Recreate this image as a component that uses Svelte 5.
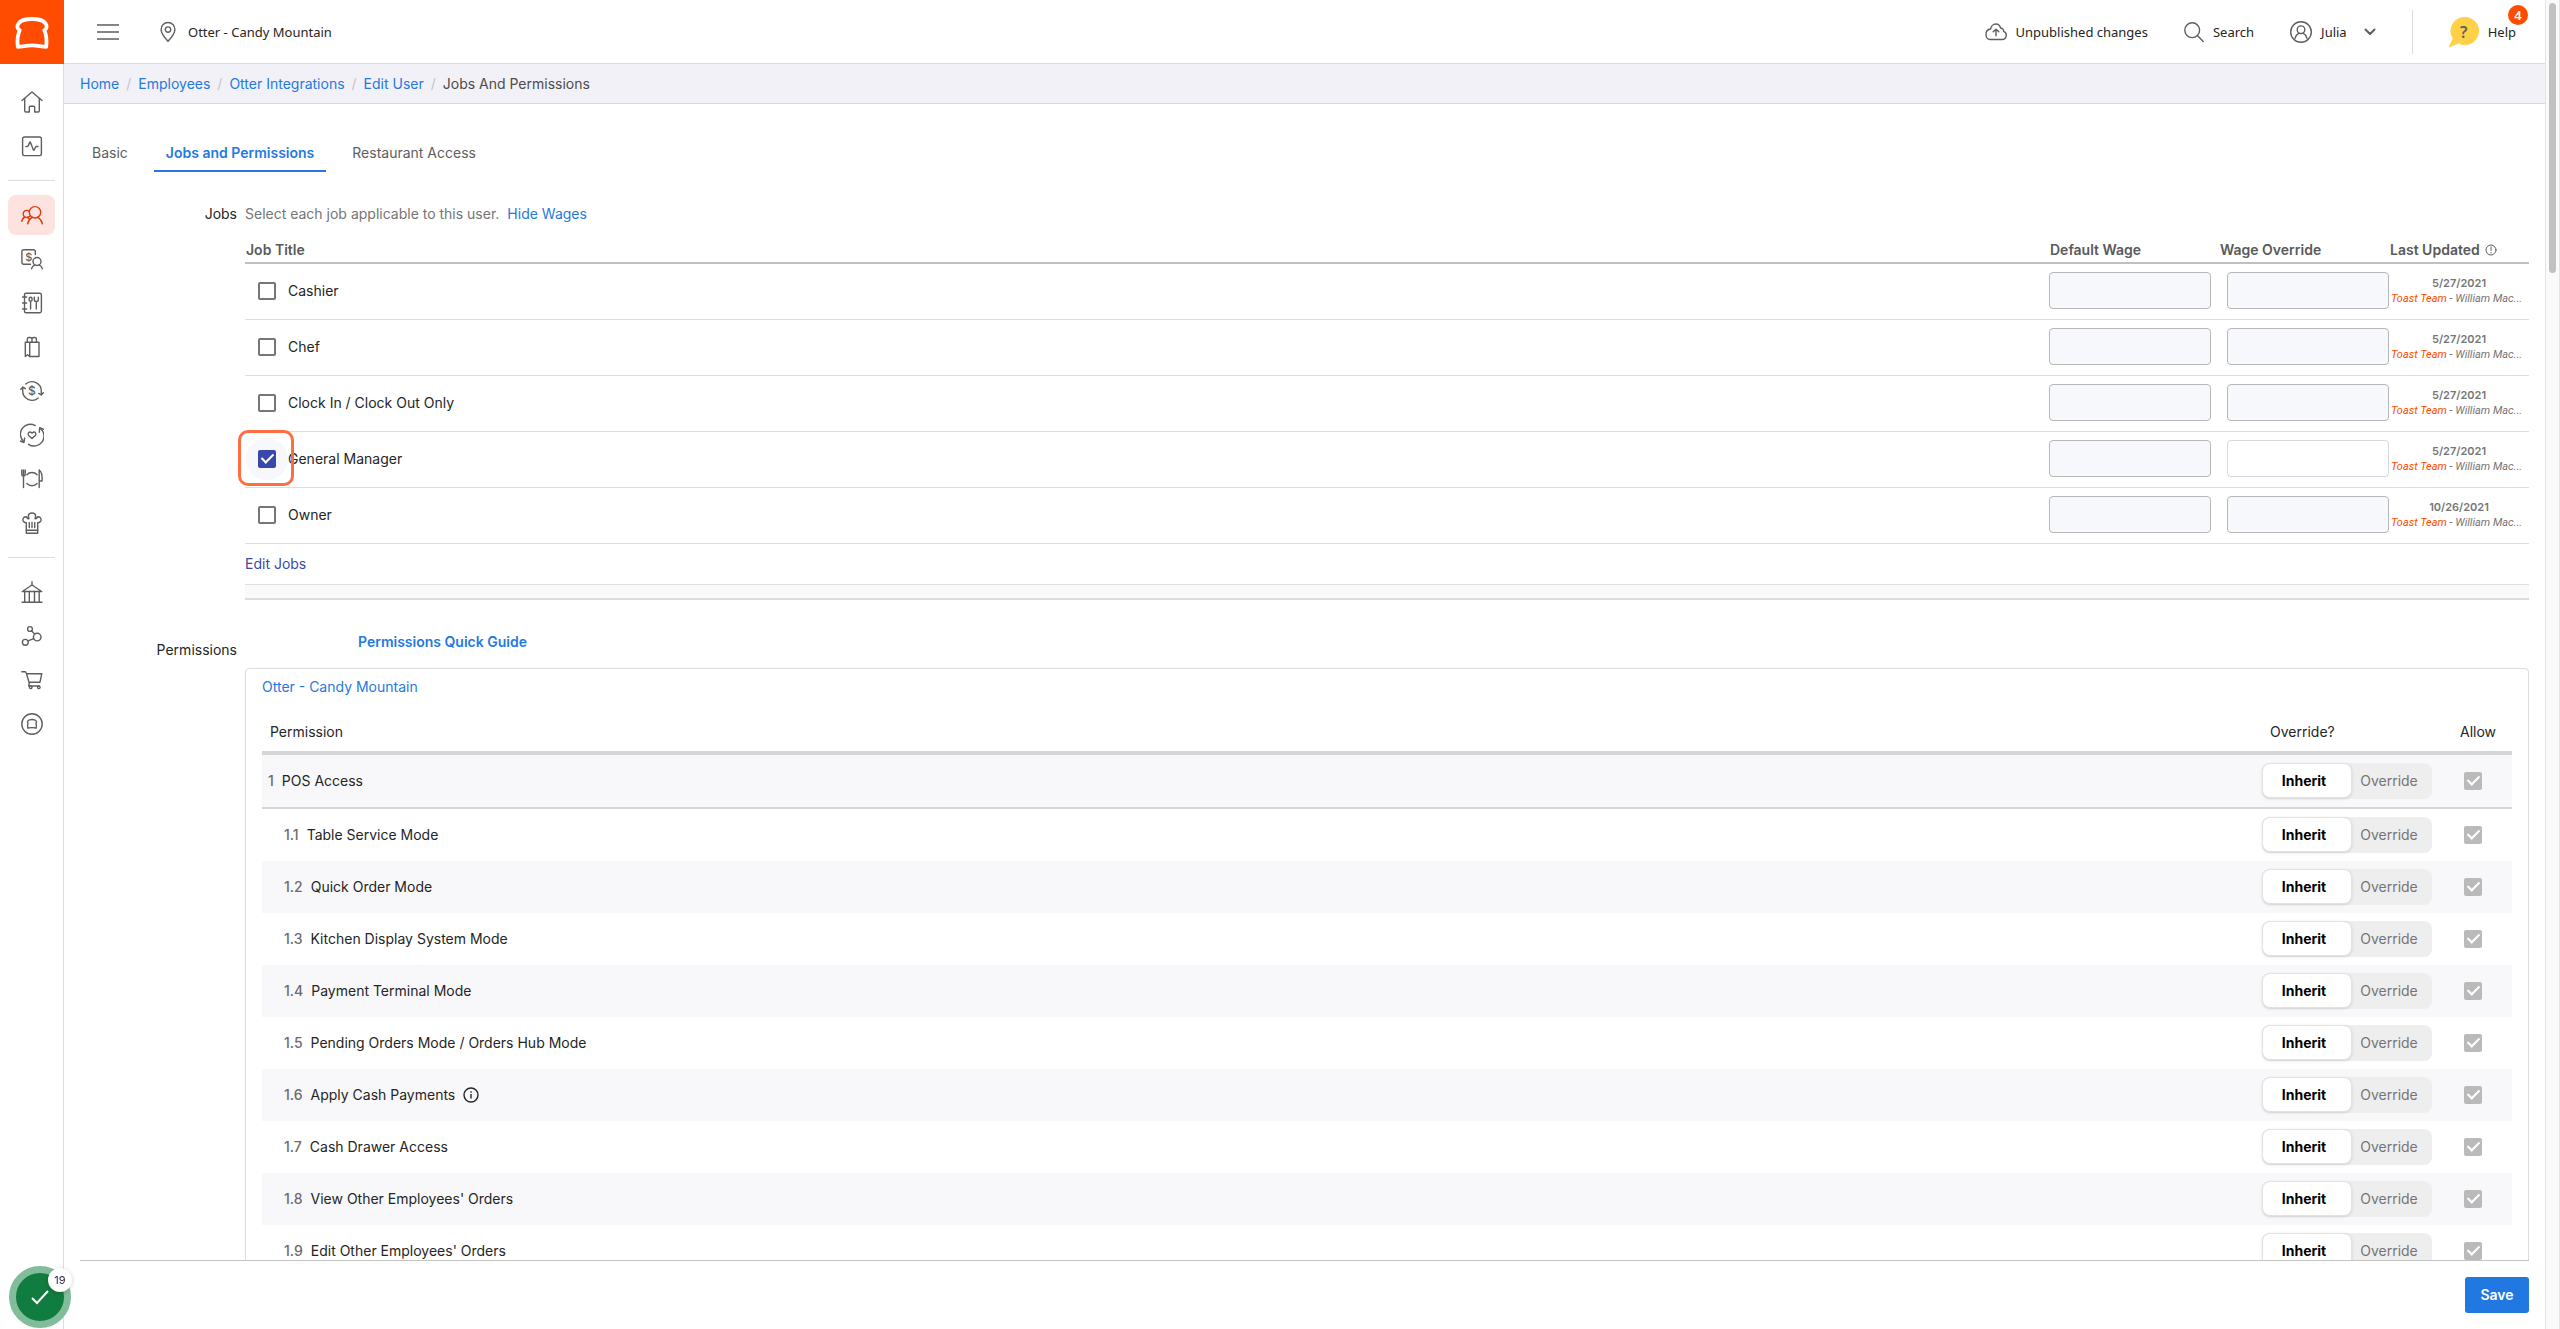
<script lang="ts">
  type Glyph = { x: number; y: number; size: number };
  type NavItem = { label: string; paths: string[]; glyph?: Glyph; active?: boolean };

  const navGroups: NavItem[][] = [
    [
      {
        label: 'Home',
        paths: [
          'M2 10.5 12 2l10 8.5',
          'M4.7 8.5v12.2A1.3 1.3 0 0 0 6 22h3.3v-4.7a1 1 0 0 1 1-1h3.4a1 1 0 0 1 1 1V22H18a1.3 1.3 0 0 0 1.3-1.3V8.5',
        ],
      },
      {
        label: 'Reports',
        paths: [
          'M4.4 3h15.2a1.8 1.8 0 0 1 1.8 1.8v15a1.8 1.8 0 0 1-1.8 1.8H4.4a1.8 1.8 0 0 1-1.8-1.8v-15A1.8 1.8 0 0 1 4.4 3Z',
          'M6 12.5h1.4c.6 0 .8-.4 1-.9l1.2-3.2c.2-.6.7-.6.9 0l2.8 7.4c.2.5.6.5.9 0l1.3-2.6c.3-.5.5-.7 1-.7H18',
        ],
      },
    ],
    [
      {
        label: 'Employees',
        active: true,
        paths: [
          'M15 3.6a5.7 5.7 0 1 1 0 11.4 5.7 5.7 0 0 1 0-11.4Z',
          'M9.3 8.4A3.6 3.6 0 1 0 9.6 13.2',
          'M7.6 20.8c.8-3 2.3-5.2 4.5-6.4M22.4 20.8c-.8-3-2.3-5.2-4.5-6.4',
          'M1.7 18.3c.6-2.2 1.6-3.6 3-4.3M7.6 14l1.8 2.2',
        ],
      },
      {
        label: 'Payroll',
        paths: [
          'M10.5 17.3H3.7a1.8 1.8 0 0 1-1.8-1.8v-11a1.8 1.8 0 0 1 1.8-1.8h9.8a1.8 1.8 0 0 1 1.8 1.8v3',
          'M17 10.5a4 4 0 1 1 0 8 4 4 0 0 1 0-8Z',
          'M11.5 21.7c.6-1.9 1.7-3.2 3.3-3.9M22.4 21.7c-.6-1.9-1.7-3.2-3.3-3.9',
        ],
        glyph: { x: 8.7, y: 13.6, size: 11 },
      },
      {
        label: 'Menus',
        paths: [
          'M6 2.2h13.6a1.8 1.8 0 0 1 1.8 1.8v16a1.8 1.8 0 0 1-1.8 1.8H6A1.5 1.5 0 0 1 4.5 20.3V3.7A1.5 1.5 0 0 1 6 2.2Z',
          'M2.6 6h4M2.6 12h4M2.6 18h4',
          'M10.6 6.3c1.1 0 1.5 1 1.5 2s-.5 2-1.5 2-1.5-1-1.5-2 .4-2 1.5-2ZM10.6 10.5V18',
          'M14.3 6.3v2.4c0 1.2.9 1.8 2 1.8s2-.6 2-1.8V6.3M16.3 10.5V18',
        ],
      },
      {
        label: 'Takeout & delivery',
        paths: [
          'M5.3 7.2H19v14.3H9.7V7.2M5.3 7.2v14.3l2.2-1.8 2.2 1.8',
          'M7.3 7V4.2c0-1 .8-1.7 1.7-1.7h1.3c1 0 1.7.7 1.7 1.7V7M12 4.2c0-1 .8-1.7 1.7-1.7h1c1 0 1.7.7 1.7 1.7V7',
        ],
      },
      {
        label: 'Payments',
        paths: [
          'M5.8 5A9.4 9.4 0 0 1 21.3 12.5v3.2M18.2 19A9.4 9.4 0 0 1 2.7 11.5V8.3',
          'M23.3 13.8l-2 2.2-2.5-1.6M.9 10.3l1.9-2.2 2.5 1.6',
        ],
        glyph: { x: 12, y: 16.4, size: 12 },
      },
      {
        label: 'Marketing',
        paths: [
          'M15.2 2.6A9.9 9.9 0 0 0 3.6 18.5M8.5 21.3A9.9 9.9 0 0 0 20.4 5.5',
          'M19.3 9.2l.4-4.5 4.1 1.6M4.6 15 4 19.5 0 17.9',
          'M12 15.5 8.7 12.4c-1.6-1.8.6-4.6 2.6-2.9l.7.6.7-.6c2-1.7 4.2 1.1 2.6 2.9Z',
        ],
      },
      {
        label: 'Tables',
        paths: [
          'M1.8 3v4.5C1.8 8.500 2.400 9 3.5 9s1.700-.5 1.700-1.500V3M3.500 3v17.500',
          'M19.2 3v17.5M19.2 3c2.2 1.5 3.2 6 2.9 11h-2.9',
          'M6.9 7.7a7 7 0 0 1 10.2 0M6.9 16.5a7 7 0 0 0 10.2 0',
        ],
      },
      {
        label: 'Kitchen',
        paths: [
          'M6.3 22.3V11.8C1.7 11.8 1.8 5.4 6.5 5.7 7.3 8 8.5 8 9 7.5 7 3.5 10 2 12 2s5 1.5 3 5.5c.5.5 1.7.5 2.5-1.8 4.7-.3 4.8 6.1.2 6.1v10.5Z',
          'M6.3 19.2h11.4M9.3 11.5v5M12 11.5v5M14.7 11.5v5',
        ],
      },
    ],
    [
      {
        label: 'Banking',
        paths: ['M12 1.8V5L2.3 11.5h19.4L12 5', 'M4.7 11.5V22M9.3 11.5V22M14.5 11.5V22M19.2 11.5V22M2 22.2h20'],
      },
      {
        label: 'Integrations',
        paths: [
          'M10 2.6a2.4 2.4 0 1 1 0 4.8 2.4 2.4 0 0 1 0-4.8Z',
          'M17.2 9.3a3.8 3.8 0 1 1 0 7.6 3.8 3.8 0 0 1 0-7.6Z',
          'M5.3 15.4a2.9 2.9 0 1 1 0 5.8 2.9 2.9 0 0 1 0-5.8Z',
          'M11.6 6.8l3 3.3M7.9 16.9l5.8-2.3',
        ],
      },
      {
        label: 'Shop',
        paths: [
          'M1.8 3.7h3.7l1 2h15.3L20 14.2H9L6.5 5.7M9.5 14.2l-.8 3.8h10.5',
          'M10.7 18a1.3 1.3 0 1 1 0 2.6 1.3 1.3 0 0 1 0-2.6ZM18.8 18a1.3 1.3 0 1 1 0 2.6 1.3 1.3 0 0 1 0-2.6Z',
        ],
      },
      {
        label: 'Toast account',
        paths: [
          'M12 1.8a10.2 10.2 0 1 1 0 20.4 10.2 10.2 0 0 1 0-20.4Z',
          'M7.8 16c-.4-1.8-.4-3.200.2-4.500C6.900 10 7.600 7.500 12 7.500s5.100 2.500 4 4c.6 1.300.6 2.700.2 4.500-2.500-.4-5.900-.4-8.400 0Z',
        ],
      },
    ],
  ];

  const crumbs = ['Home', 'Employees', 'Otter Integrations', 'Edit User'];
  const tabs = ['Basic', 'Jobs and Permissions', 'Restaurant Access'];
  let activeTab = $state('Jobs and Permissions');
  let showWages = $state(true);

  let jobs = $state([
    { title: 'Cashier', checked: false, updated: '5/27/2021' },
    { title: 'Chef', checked: false, updated: '5/27/2021' },
    { title: 'Clock In / Clock Out Only', checked: false, updated: '5/27/2021' },
    { title: 'General Manager', checked: true, updated: '5/27/2021' },
    { title: 'Owner', checked: false, updated: '10/26/2021' },
  ]);

  let permissions = $state([
    { id: '1', name: 'POS Access', override: false },
    { id: '1.1', name: 'Table Service Mode', override: false },
    { id: '1.2', name: 'Quick Order Mode', override: false },
    { id: '1.3', name: 'Kitchen Display System Mode', override: false },
    { id: '1.4', name: 'Payment Terminal Mode', override: false },
    { id: '1.5', name: 'Pending Orders Mode / Orders Hub Mode', override: false },
    { id: '1.6', name: 'Apply Cash Payments', override: false, info: true },
    { id: '1.7', name: 'Cash Drawer Access', override: false },
    { id: '1.8', name: "View Other Employees' Orders", override: false },
    { id: '1.9', name: "Edit Other Employees' Orders", override: false },
  ]);
</script>

<div class="app">
  <aside class="sidebar">
    <a class="logo" href="#home" aria-label="Toast">
      <svg width="64" height="64" viewBox="0 0 64 64" fill="none" stroke="#fff" stroke-width="3.8" stroke-linejoin="round">
        <path d="M17.8 46.9C17 40 17.3 35.2 19.7 30.2 17 28.8 16.8 25.8 18.4 23.6 20.6 20.2 26 19 32 19s11.4 1.2 13.6 4.6c1.6 2.2 1.4 5.2-1.3 6.6 2.4 5 2.7 9.8 1.9 16.7C41 46.8 38 45.4 32 45.4s-9 1.4-14.2 1.5Z" />
      </svg>
    </a>
    <nav aria-label="Main">
      {#each navGroups as group}
        <ul class="nav-group">
          {#each group as item (item.label)}
            <li>
              <a href="#nav" class="nav-item" class:active={item.active} aria-label={item.label}>
                <svg class="icon" width="24" height="24" viewBox="0 0 24 24">
                  {#each item.paths as d}
                    <path {d} />
                  {/each}
                  {#if item.glyph}
                    <text x={item.glyph.x} y={item.glyph.y} font-size={item.glyph.size}>$</text>
                  {/if}
                </svg>
              </a>
            </li>
          {/each}
        </ul>
      {/each}
    </nav>
  </aside>

  <div class="main">
    <header class="topbar">
      <button type="button" class="icon-button" aria-label="Toggle menu">
        <svg class="icon" width="22" height="22" viewBox="0 0 22 22"><path d="M0 4h22M0 11h22M0 18h22" /></svg>
      </button>
      <button type="button" class="top-item location">
        <svg class="icon" width="16" height="22" viewBox="0 0 16 22">
          <path d="M8 1.5a6.9 6.9 0 0 0-6.9 7C1.1 13 6 18 8 20.3 10 18 14.9 13 14.9 8.5A6.9 6.9 0 0 0 8 1.5Z" />
          <circle cx="8" cy="8.6" r="2.7" />
        </svg>
        Otter - Candy Mountain
      </button>
      <div class="top-actions">
        <button type="button" class="top-item">
          <svg class="icon" width="22" height="22" viewBox="0 0 22 22">
            <path d="M5 18.5h12a4.2 4.2 0 0 0 1.6-8.1c.2-2-1.4-3.4-3-3.4C14.8 4.3 13 3 11 3 8.2 3 5.9 5.2 5.7 8 2.8 8.3 1 10.6 1 13.4c0 2.9 1.8 5.1 4 5.1Z" />
            <path d="M11 14.8V8.5M8.2 10.8 11 8.2l2.8 2.6" />
          </svg>
          Unpublished changes
        </button>
        <button type="button" class="top-item">
          <svg class="icon" width="20" height="22" viewBox="0 0 20 22">
            <circle cx="8.2" cy="9.2" r="7.4" />
            <path d="M13.4 14.6l5.8 5.8" />
          </svg>
          Search
        </button>
        <button type="button" class="top-item user">
          <svg class="icon" width="22" height="22" viewBox="0 0 22 22">
            <circle cx="11" cy="11" r="10.3" />
            <circle cx="11" cy="8.7" r="3.8" />
            <path d="M5 17.4c.7-2.4 2-4.200 4-5.200M17 17.400c-.7-2.400-2-4.200-4-5.200" />
          </svg>
          Julia
          <svg class="icon chevron" width="12" height="8" viewBox="0 0 12 8"><path d="M1.5 1.5 6 6l4.5-4.5" /></svg>
        </button>
        <span class="divider"></span>
        <button type="button" class="top-item help">
          <span class="help-bubble">
            <svg width="30" height="30" viewBox="0 0 30 30" fill="#ffd147" aria-hidden="true">
              <path d="M16 0a14 14 0 1 1-6.5 26.400L1 30c-.8.300-1.300-.4-.9-1l3.700-7.400A14 14 0 0 1 16 0Z" />
            </svg>
            <span class="help-mark">?</span>
          </span>
          Help
          <span class="badge">4</span>
        </button>
      </div>
    </header>

    <nav class="breadcrumbs" aria-label="Breadcrumb">
      {#each crumbs as crumb}
        <a href="#crumb">{crumb}</a>
        <span class="slash">/</span>
      {/each}
      <span>Jobs And Permissions</span>
    </nav>

    <main class="content">
      <div class="tabs" role="tablist">
        {#each tabs as tab}
          <button
            type="button"
            role="tab"
            class="tab"
            class:selected={activeTab === tab}
            aria-selected={activeTab === tab}
            onclick={() => (activeTab = tab)}>{tab}</button
          >
        {/each}
      </div>

      <section class="form-row">
        <h2 class="form-label">Jobs</h2>
        <div class="form-body">
          <p class="hint">
            Select each job applicable to this user.
            <button type="button" class="link" onclick={() => (showWages = !showWages)}>
              {showWages ? 'Hide Wages' : 'Show Wages'}
            </button>
          </p>

          <table class="jobs">
            <thead>
              <tr>
                <th>Job Title</th>
                {#if showWages}
                  <th class="wage-col">Default Wage</th>
                  <th class="wage-col">Wage Override</th>
                {/if}
                <th class="updated-col">
                  <span class="updated-head">
                    Last Updated
                    <svg class="icon" width="12" height="12" viewBox="0 0 12 12">
                      <circle cx="6" cy="6" r="5" /><path d="M6 3v3.5M6 8.500v.5" />
                    </svg>
                  </span>
                </th>
              </tr>
            </thead>
            <tbody>
              {#each jobs as job (job.title)}
                <tr>
                  <td>
                    <label class="job">
                      <span class="check-wrap" class:highlight={job.checked}>
                        <input type="checkbox" class="check" bind:checked={job.checked} />
                      </span>
                      {job.title}
                    </label>
                  </td>
                  {#if showWages}
                    <td class="wage">
                      <input class="wage-input" type="text" disabled aria-label="Default wage, {job.title}" />
                    </td>
                    <td class="wage override">
                      <input class="wage-input" type="text" disabled={!job.checked} aria-label="Wage override, {job.title}" />
                    </td>
                  {/if}
                  <td class="updated">
                    <strong>{job.updated}</strong>
                    <em><span class="team">Toast Team</span> - William Mac...</em>
                  </td>
                </tr>
              {/each}
            </tbody>
          </table>

          <a class="edit-jobs" href="#jobs">Edit Jobs</a>
          <div class="band"></div>
        </div>
      </section>

      <section class="form-row permissions">
        <h2 class="form-label">Permissions</h2>
        <div class="form-body">
          <a class="guide" href="#guide">Permissions Quick Guide</a>
          <div class="panel">
            <a class="restaurant" href="#restaurant">Otter - Candy Mountain</a>
            <table class="perms">
              <thead>
                <tr>
                  <th>Permission</th>
                  <th class="override-col">Override?</th>
                  <th class="allow-col">Allow</th>
                </tr>
              </thead>
              <tbody>
                {#each permissions as perm, i (perm.id)}
                  <tr class:top-level={i === 0}>
                    <td>
                      <span class="perm">
                        <span class="num">{perm.id}</span>
                        {perm.name}
                        {#if perm.info}
                          <svg class="info" width="16" height="16" viewBox="0 0 16 16">
                            <circle cx="8" cy="8" r="7" /><path d="M8 7v4.5M8 4.3v1.4" />
                          </svg>
                        {/if}
                      </span>
                    </td>
                    <td>
                      <div class="toggle">
                        <button type="button" class:on={!perm.override} aria-pressed={!perm.override} onclick={() => (perm.override = false)}>Inherit</button>
                        <button type="button" class:on={perm.override} aria-pressed={perm.override} onclick={() => (perm.override = true)}>Override</button>
                      </div>
                    </td>
                    <td class="allow">
                      <input type="checkbox" class="check" checked disabled={!perm.override} aria-label="Allow {perm.name}" />
                    </td>
                  </tr>
                {/each}
              </tbody>
            </table>
          </div>
        </div>
      </section>
    </main>

    <footer class="footer">
      <button type="button" class="save">Save</button>
    </footer>
  </div>

  <div class="scrollbar" aria-hidden="true"><div class="thumb"></div></div>

  <button type="button" class="checklist" aria-label="Open checklist">
    <svg width="24" height="24" viewBox="0 0 24 24" fill="none" stroke="#fff" stroke-width="2"><path d="M4 13l5 5L20 6" /></svg>
    <span class="count">19</span>
  </button>
</div>

<style>
  :global(body) {
    margin: 0;
    overflow: hidden;
  }

  .app {
    --blue: #2479e2;
    --grey: #5e5e5e;
    --line: #dcdcde;
    display: grid;
    grid-template-columns: 64px 1fr 15px;
    height: 100vh;
    background: #fff;
    color: #252525;
    font: 14px/20px Inter, "Liberation Sans", sans-serif;
  }

  .app *,
  .app *::before,
  .app *::after {
    box-sizing: border-box;
  }

  button {
    font: inherit;
    color: inherit;
    border: 0;
    padding: 0;
    background: none;
    cursor: pointer;
  }

  a {
    color: var(--blue);
    text-decoration: none;
  }

  svg {
    display: block;
    flex: none;
  }

  .icon {
    fill: none;
    stroke: currentColor;
    stroke-width: 1.4;
    stroke-linecap: round;
    stroke-linejoin: round;
    color: var(--grey);
  }

  .icon text {
    fill: currentColor;
    stroke: none;
    text-anchor: middle;
    font-weight: 500;
  }

  /* sidebar */
  .sidebar {
    border-right: 1px solid var(--line);
  }

  .logo {
    display: block;
    width: 64px;
    height: 64px;
    background: #ff4c00;
  }

  .sidebar nav {
    padding: 4px 8px;
  }

  .nav-group {
    display: flex;
    flex-direction: column;
    gap: 4px;
    margin: 0;
    padding: 14px 0;
    list-style: none;
  }

  .nav-group + .nav-group {
    border-top: 1px solid var(--line);
  }

  .nav-item {
    display: flex;
    align-items: center;
    justify-content: center;
    height: 40px;
    border-radius: 8px;
  }

  .nav-item.active {
    background: #fde3df;
  }

  .nav-item.active .icon {
    color: #e03a10;
  }

  /* header */
  .main {
    display: flex;
    flex-direction: column;
    min-width: 0;
    min-height: 0;
  }

  .topbar {
    display: flex;
    align-items: center;
    flex: none;
    height: 64px;
    padding: 0 17px 0 33px;
    border-bottom: 1px solid var(--line);
    font-family: "Noto Sans", sans-serif;
    font-size: 13px;
  }

  .top-item {
    display: flex;
    align-items: center;
    gap: 9px;
  }

  .location {
    margin-left: 41px;
    gap: 12px;
  }

  .top-actions {
    display: flex;
    align-items: center;
    gap: 36px;
    margin-left: auto;
  }

  .chevron {
    margin-left: 8px;
    stroke-width: 2;
  }

  .divider {
    width: 1px;
    height: 44px;
    background: var(--line);
  }

  .help {
    position: relative;
    padding-right: 12px;
  }

  .help-bubble {
    display: grid;
    place-items: center;
  }

  .help-bubble > * {
    grid-area: 1 / 1;
  }

  .help-mark {
    color: #5e5e5e;
    font-size: 16px;
    font-weight: 600;
  }

  .badge {
    position: absolute;
    top: -12px;
    right: 0;
    width: 20px;
    height: 20px;
    border-radius: 50%;
    background: #ff4c00;
    color: #fff;
    font-weight: 600;
    line-height: 20px;
    text-align: center;
  }

  .breadcrumbs {
    display: flex;
    align-items: center;
    flex: none;
    gap: 7px;
    height: 40px;
    padding: 0 16px;
    border-bottom: 1px solid #d8d8de;
    background: #f2f1f7;
    color: #4c4c4c;
  }

  .slash {
    color: #c4c4c8;
  }

  /* content */
  .content {
    flex: 1;
    min-height: 0;
    margin: 0 16px;
    overflow-y: auto;
    scrollbar-width: none;
  }

  .tabs {
    display: flex;
    gap: 14px;
    padding-top: 32px;
  }

  .tab {
    height: 36px;
    padding: 0 12px;
    border-bottom: 2px solid transparent;
    color: #5e5e5e;
  }

  .tab.selected {
    border-color: var(--blue);
    color: var(--blue);
    font-weight: 600;
  }

  .form-row {
    display: grid;
    grid-template-columns: 157px 1fr;
    column-gap: 8px;
    padding-top: 32px;
  }

  .form-label {
    margin: 0;
    font-size: 14px;
    font-weight: 400;
    text-align: right;
  }

  .form-body {
    min-width: 0;
  }

  .hint {
    display: flex;
    gap: 8px;
    margin: 0 0 16px;
    color: #757575;
  }

  .link {
    color: var(--blue);
  }

  table {
    width: 100%;
    border-collapse: separate;
    border-spacing: 0;
    table-layout: fixed;
  }

  th,
  td {
    padding: 0;
    text-align: left;
  }

  .jobs th {
    height: 24px;
    padding: 0 1px 2px;
    border-bottom: 2px solid #c0c0c0;
    color: #5a5a5a;
    font-weight: 600;
    white-space: nowrap;
  }

  .jobs .wage-col {
    width: 170px;
  }

  .jobs .updated-col {
    width: 140px;
  }

  .updated-head {
    display: flex;
    align-items: center;
    gap: 5px;
  }

  .updated-head .icon {
    stroke-width: 1;
  }

  .jobs td {
    height: 56px;
    padding-bottom: 1px;
    border-bottom: 1px solid #dedede;
  }

  .job {
    display: flex;
    align-items: center;
    gap: 12px;
    padding-left: 13px;
  }

  .check-wrap {
    position: relative;
    display: flex;
  }

  .check {
    position: relative;
    width: 18px;
    height: 18px;
    margin: 0;
    border: 2px solid #757575;
    border-radius: 2px;
    appearance: none;
  }

  .check:checked {
    border-color: #3949ab;
    background: #3949ab;
  }

  .check:checked:disabled {
    border-color: #bababa;
    background: #bababa;
  }

  .check:checked::after {
    content: '';
    position: absolute;
    top: -1px;
    left: 4px;
    width: 7px;
    height: 12px;
    border: solid #fff;
    border-width: 0 2px 2px 0;
    transform: rotate(45deg);
  }

  .highlight::before {
    content: '';
    position: absolute;
    inset: -12px;
    border-radius: 50%;
    background: #f7f8fc;
  }

  .highlight::after {
    content: '';
    position: absolute;
    inset: -20px -18px -18px -20px;
    border: 3px solid #ff6d42;
    border-radius: 10px;
    pointer-events: none;
  }

  .jobs .wage {
    padding-top: 8px;
    vertical-align: top;
  }

  .jobs .override {
    padding-left: 8px;
  }

  .wage-input {
    display: block;
    width: 162px;
    height: 37px;
    padding: 0 8px;
    border: 1px solid #d5d6de;
    border-radius: 4px;
    background: #fff;
    font: inherit;
  }

  .wage-input:disabled {
    border-color: #b8b8b8;
    background: #f7f8fc;
  }

  .updated {
    color: #757575;
    font-size: 11px;
    line-height: 16px;
    white-space: nowrap;
  }

  .updated strong {
    display: block;
    font-weight: 600;
    text-align: center;
  }

  .updated em {
    display: block;
    padding-left: 2px;
    font-family: Roboto, sans-serif;
  }

  .team {
    color: #ff4c00;
  }

  .edit-jobs {
    display: block;
    padding: 10px 0;
    color: #3949ab;
  }

  .band {
    height: 16px;
    border-top: 1px solid #dfdfdf;
    border-bottom: 2px solid #dcdcdc;
    background: #f9f9f9;
  }

  .permissions .form-label {
    padding-top: 8px;
  }

  .guide {
    display: block;
    padding-left: 113px;
    font-weight: 600;
  }

  .panel {
    margin-top: 16px;
    padding: 8px 16px;
    border: 1px solid var(--line);
    border-radius: 4px;
  }

  .restaurant {
    display: block;
    margin-bottom: 24px;
  }

  .perms th {
    height: 34px;
    padding: 0 8px 8px;
    border-bottom: 4px solid #d6d6d6;
    font-weight: 400;
  }

  .perms .override-col {
    width: 190px;
  }

  .perms .allow-col {
    width: 60px;
  }

  .perms td {
    height: 52px;
    padding-left: 22px;
  }

  .perms td + td {
    padding-left: 0;
  }

  .perms td.allow {
    padding-left: 12px;
  }

  .perms tr:nth-child(odd) td {
    background: #f8f8fa;
  }

  .perms tr:nth-child(even) td {
    background: #fff;
  }

  .perms tr.top-level td {
    height: 54px;
    border-bottom: 2px solid #d6d6d6;
  }

  .perms tr.top-level td:first-child {
    padding-left: 6px;
  }

  .perm {
    display: flex;
    align-items: center;
    gap: 8px;
  }

  .num {
    color: #6c6c6c;
    font-weight: 500;
  }

  .info {
    fill: none;
    stroke: #252525;
    stroke-width: 1.4;
  }

  .toggle {
    display: flex;
    width: 170px;
    height: 36px;
    border-radius: 8px;
    background: #eee;
  }

  .toggle button {
    width: 80px;
    padding-right: 6px;
    color: #757575;
  }

  .toggle .on {
    width: 90px;
    margin-bottom: 1px;
    border: 1px solid #e2e2e2;
    border-radius: 8px;
    background: #fff;
    box-shadow: 0 1px 3px rgba(0, 0, 0, 0.12);
    color: #000;
    font-weight: 700;
  }

  .allow .check {
    display: block;
  }

  .footer {
    display: flex;
    justify-content: flex-end;
    flex: none;
    margin: 0 16px;
    padding: 16px 0;
    border-top: 1px solid #c4c4c4;
  }

  .save {
    width: 64px;
    height: 36px;
    border-radius: 3px;
    background: #2078e0;
    color: #fff;
    font-weight: 600;
  }

  .scrollbar {
    padding: 3px;
    border: solid #e4e4e4;
    border-width: 0 1px;
    background: #fafafa;
  }

  .thumb {
    height: 270px;
    border-radius: 4px;
    background: #c1c1c1;
  }

  .checklist {
    position: fixed;
    bottom: 1px;
    left: 9px;
    display: flex;
    align-items: center;
    justify-content: center;
    width: 62px;
    height: 62px;
    border: 7px solid #82bd9b;
    border-radius: 50%;
    background: #117c3f;
  }

  .count {
    position: absolute;
    top: -5px;
    right: -8px;
    width: 24px;
    height: 24px;
    border-radius: 50%;
    background: #fff;
    box-shadow: 0 1px 4px rgba(0, 0, 0, 0.2);
    color: #2b1f45;
    font-size: 11px;
    line-height: 24px;
    text-align: center;
  }
</style>
